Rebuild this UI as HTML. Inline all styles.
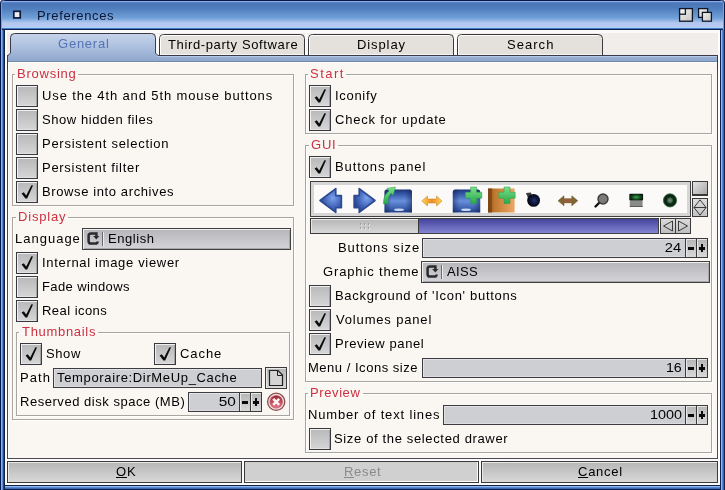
<!DOCTYPE html>
<html><head><meta charset="utf-8"><style>
*{margin:0;padding:0;box-sizing:border-box}
html,body{width:725px;height:490px;overflow:hidden}
body{position:relative;background:#f0edea;font-family:"Liberation Sans",sans-serif;font-size:13px;line-height:15px;color:#000}
.a{position:absolute}
.t{position:absolute;white-space:nowrap;will-change:transform}
#title{left:0;top:0;width:725px;height:30px;border-radius:4px 4px 0 0;box-shadow:inset 1px 0 0 #0a1a48, inset 2px 0 0 #7c9ee0, inset -1px 0 0 #0a1a48, inset -2px 0 0 #7c9ee0;background:linear-gradient(#0a1a48 0,#0a1a48 1px,#88a8e8 1px,#88a8e8 2px,#6890d0 2px,#4a76b8 3px,#4e7cbc 8px,#70a0d8 18px,#b4c8f0 23px,#b8ccf2 27px,#a8d4ff 27px,#a8d4ff 28px,#4878c0 28px,#4878c0 29px,#102050 29px,#102050 30px)}
#bl{left:0;top:30px;width:5px;height:460px;background:linear-gradient(90deg,#001850 0,#001850 1px,#8ab0f0 1px,#8ab0f0 2px,#5a88d0 2px,#5a88d0 3px,#2a4a90 3px,#2a4a90 4px,#102040 4px,#102040 5px)}
#br{left:720px;top:30px;width:5px;height:460px;background:linear-gradient(90deg,#102050 0,#102050 1px,#90b8f8 1px,#90b8f8 2px,#5a88d0 2px,#5a88d0 3px,#3a68b0 3px,#3a68b0 4px,#102050 4px,#102050 5px)}
#bb{left:0;top:485px;width:725px;height:5px;background:linear-gradient(#102040 0,#102040 1px,#90b8f8 1px,#90b8f8 2px,#5a88d0 2px,#5a88d0 3px,#3a68b0 3px,#3a68b0 4px,#102050 4px,#102050 5px)}
#inner{left:5px;top:30px;width:715px;height:455px;background:#f0edea;border-left:2px solid #fff;border-top:3px solid #fbfaf8;border-bottom:2px solid #fff;border-right:2px solid #fff}
#page{left:7px;top:55px;width:711px;height:404px;border:1px solid #4a4a54;background:#faf7f3;box-shadow:inset 1px 0 0 #fff}
.g{position:absolute;border:1px solid #a8a4a0;box-shadow:1px 1px 0 #fff, inset 1px 1px 0 #fff}
.gl{position:absolute;background:#faf7f3}
.cb{position:absolute;width:22px;height:22px;border:1px solid #383840;background:linear-gradient(#b8b8b8,#d6d6d6);box-shadow:inset 1px 1px 0 #f0f0f0, inset -1px 0 0 #a4a4a4, inset 0 -1px 0 #e2e2e2}
.cb svg{position:absolute;left:0;top:0}
.pop{position:absolute;border:1px solid #404040;background:linear-gradient(#b6b6ba,#d4d4d8);box-shadow:inset 1px 1px 0 #f0f0f0, inset -1px -1px 0 #a8a8ac}
.str{position:absolute;border:1px solid #3c3c42;background:#cecfd2;box-shadow:inset 1px 1px 0 #e2e2e6, inset 0 -1px 0 #dcdce0}
.btn{position:absolute;border:1px solid #3a3a3a;background:linear-gradient(#b6b6b6,#d8d8d8);box-shadow:inset 1px 1px 0 #e8e8e8}
</style></head><body>
<div id="title" class="a"></div><div id="bb" class="a"></div><div id="bl" class="a"></div><div id="br" class="a"></div><div id="inner" class="a"></div>
<svg class="a" style="left:10px;top:7px" width="15" height="15" viewBox="10 7 15 15"><rect x="13.8" y="11.3" width="6.4" height="6.6" fill="#f0eeea" stroke="#101a40" stroke-width="1.7"/></svg>
<div class="t" style="left:36.6px;top:8px;letter-spacing:0.650px;color:#0e1634;">Preferences</div>
<svg class="a" style="left:676px;top:5px" width="40" height="20" viewBox="676 5 40 20"><defs><linearGradient id="tg" x1="0" y1="0" x2="1" y2="1"><stop offset="0" stop-color="#f4f2ee"/><stop offset="1" stop-color="#c8c6c4"/></linearGradient></defs><rect x="679.6" y="8.6" width="12.8" height="12.6" fill="url(#tg)" stroke="#101828" stroke-width="1.3"/><rect x="679.6" y="8.6" width="5.8" height="5.6" fill="#f2f0ec" stroke="#101828" stroke-width="1.3"/><rect x="698.6" y="8.6" width="9" height="8.8" fill="url(#tg)" stroke="#101828" stroke-width="1.3"/><rect x="702.4" y="12.4" width="9" height="8.8" fill="url(#tg)" stroke="#101828" stroke-width="1.3"/></svg>
<div id="page" class="a"></div>
<svg class="a" style="left:0;top:0" width="725" height="70" viewBox="0 0 725 70">
<defs><linearGradient id="gact" x1="0" y1="0" x2="0" y2="1"><stop offset="0" stop-color="#c6d4ea"/><stop offset="0.55" stop-color="#a8bcdc"/><stop offset="1" stop-color="#8ea6cc"/></linearGradient></defs>
<rect x="156" y="34" width="3" height="21" fill="#fbfaf8"/><rect x="305" y="34" width="3" height="21" fill="#fbfaf8"/><rect x="454" y="34" width="3" height="21" fill="#fbfaf8"/>
<g fill="#e4e1dc" stroke="#3a3a3e" stroke-width="1">
<path d="M159.5,55.5 V38.5 Q159.5,34.5 163.5,34.5 H300.5 Q304.5,34.5 304.5,38.5 V55.5"/>
<path d="M308.5,55.5 V38.5 Q308.5,34.5 312.5,34.5 H449.5 Q453.5,34.5 453.5,38.5 V55.5"/>
<path d="M457.5,55.5 V38.5 Q457.5,34.5 461.5,34.5 H598.5 Q602.5,34.5 602.5,38.5 V55.5"/>
</g>
<g stroke="#ffffff" stroke-width="1" fill="none">
<path d="M160.5,54.5 V38.5 Q160.5,35.5 163.5,35.5 H300"/><path d="M309.5,54.5 V38.5 Q309.5,35.5 312.5,35.5 H449"/><path d="M458.5,54.5 V38.5 Q458.5,35.5 461.5,35.5 H598"/><path d="M160,54.5 H304 M309,54.5 H453 M458,54.5 H602" stroke="#f6f4f2"/>
</g>
<path d="M7.5,62 V56 L10.5,53 V37.5 Q10.5,33.5 14.5,33.5 H151.5 Q155.5,33.5 155.5,37.5 V53 L158,55.5 H717.5 V62 Z" fill="url(#gact)"/>
<path d="M7.5,70 V56 L10.5,53 V37.5 Q10.5,33.5 14.5,33.5 H151.5 Q155.5,33.5 155.5,37.5 V53 L158,55.5 H717.5 V70" fill="none" stroke="#3a3a48" stroke-width="1"/>
<rect x="157" y="56" width="560" height="1" fill="#b4c8e8"/><rect x="8" y="61" width="709" height="1" fill="#7088aa"/><rect x="8" y="62" width="709" height="1" fill="#ffffff"/>
</svg>
<div class="t" style="left:57.8px;top:36px;letter-spacing:0.767px;color:#5674b4;">General</div>
<div class="t" style="left:168.3px;top:37px;letter-spacing:0.626px;">Third-party Software</div>
<div class="t" style="left:357.2px;top:37px;letter-spacing:0.900px;">Display</div>
<div class="t" style="left:507.4px;top:37px;letter-spacing:1.040px;">Search</div>
<div class="g" style="left:12px;top:74px;width:282px;height:132px"></div>
<div class="gl" style="left:15px;top:71px;width:63px;height:4px"></div>
<div class="t" style="left:17.2px;top:66px;letter-spacing:0.757px;color:#cc3040;">Browsing</div>
<div class="cb" style="left:16px;top:85px"></div>
<div class="t" style="left:41.5px;top:88px;letter-spacing:0.869px;">Use the 4th and 5th mouse buttons</div>
<div class="cb" style="left:16px;top:109px"></div>
<div class="t" style="left:41.5px;top:112px;letter-spacing:0.556px;">Show hidden files</div>
<div class="cb" style="left:16px;top:133px"></div>
<div class="t" style="left:41.5px;top:136px;letter-spacing:0.726px;">Persistent selection</div>
<div class="cb" style="left:16px;top:157px"></div>
<div class="t" style="left:41.5px;top:160px;letter-spacing:0.706px;">Persistent filter</div>
<div class="cb" style="left:16px;top:181px"><svg width="22" height="22" viewBox="0 0 22 22"><path d="M4.6,11.6 L6.8,10.2 L9.2,13.4 L14.4,3.2 L16,3.6 L10.2,16.4 L8.4,16.6 Z" fill="#0a0a0a"/></svg></div>
<div class="t" style="left:41.5px;top:184px;letter-spacing:0.611px;">Browse into archives</div>
<div class="g" style="left:12px;top:217px;width:282px;height:203px"></div>
<div class="gl" style="left:16px;top:214px;width:52px;height:4px"></div>
<div class="t" style="left:17.8px;top:209px;letter-spacing:0.833px;color:#cc3040;">Display</div>
<div class="t" style="left:15.1px;top:231px;letter-spacing:1.000px;">Language</div>
<div class="pop" style="left:82px;top:228px;width:209px;height:22px"></div>
<div class="a" style="left:82px;top:228px"><svg width="22" height="22" viewBox="0 0 22 22"><path d="M14.4,8.5 V5.4 H9 Q6.6,5.4 6.6,7.8 V13.2 Q6.6,15.6 9,15.6 H13.2 Q15.6,15.6 15.6,13.4" fill="none" stroke="#2c2c2c" stroke-width="2.5"/><path d="M11.2,8 H17.4 L14.3,11.4 Z" fill="#2c2c2c"/></svg></div>
<div class="a" style="left:102px;top:232px;width:1px;height:14px;background:#6a6a6a;box-shadow:1px 0 0 #ececec"></div>
<div class="t" style="left:107.5px;top:231px;letter-spacing:0.550px;">English</div>
<div class="cb" style="left:16px;top:252px"><svg width="22" height="22" viewBox="0 0 22 22"><path d="M4.6,11.6 L6.8,10.2 L9.2,13.4 L14.4,3.2 L16,3.6 L10.2,16.4 L8.4,16.6 Z" fill="#0a0a0a"/></svg></div>
<div class="t" style="left:41.5px;top:255px;letter-spacing:0.680px;">Internal image viewer</div>
<div class="cb" style="left:16px;top:276px"></div>
<div class="t" style="left:41.5px;top:279px;letter-spacing:0.400px;">Fade windows</div>
<div class="cb" style="left:16px;top:300px"><svg width="22" height="22" viewBox="0 0 22 22"><path d="M4.6,11.6 L6.8,10.2 L9.2,13.4 L14.4,3.2 L16,3.6 L10.2,16.4 L8.4,16.6 Z" fill="#0a0a0a"/></svg></div>
<div class="t" style="left:41.5px;top:303px;letter-spacing:0.456px;">Real icons</div>
<div class="g" style="left:16px;top:332px;width:274px;height:84px"></div>
<div class="gl" style="left:19px;top:329px;width:79px;height:4px"></div>
<div class="t" style="left:21.8px;top:324px;letter-spacing:0.689px;color:#cc3040;">Thumbnails</div>
<div class="cb" style="left:20px;top:343px"><svg width="22" height="22" viewBox="0 0 22 22"><path d="M4.6,11.6 L6.8,10.2 L9.2,13.4 L14.4,3.2 L16,3.6 L10.2,16.4 L8.4,16.6 Z" fill="#0a0a0a"/></svg></div>
<div class="t" style="left:45.9px;top:346px;letter-spacing:0.600px;">Show</div>
<div class="cb" style="left:154px;top:343px"><svg width="22" height="22" viewBox="0 0 22 22"><path d="M4.6,11.6 L6.8,10.2 L9.2,13.4 L14.4,3.2 L16,3.6 L10.2,16.4 L8.4,16.6 Z" fill="#0a0a0a"/></svg></div>
<div class="t" style="left:179.5px;top:346px;letter-spacing:0.925px;">Cache</div>
<div class="t" style="left:19.8px;top:370px;letter-spacing:1.100px;">Path</div>
<div class="str" style="left:53px;top:368px;width:209px;height:20px"></div>
<div class="t" style="left:57.2px;top:370px;letter-spacing:0.652px;">Temporaire:DirMeUp_Cache</div>
<div class="btn" style="left:265px;top:367px;width:22px;height:22px"></div>
<svg class="a" style="left:265px;top:367px" width="22" height="22" viewBox="0 0 22 22"><path d="M4.5,3.5 H13 L17.5,8 V18.5 H4.5 Z" fill="#d4d4d4" stroke="#202020" stroke-width="1.2"/><path d="M12.5,3.5 V8.5 H17.5" fill="none" stroke="#202020" stroke-width="1"/></svg>
<div class="t" style="left:19.7px;top:394px;letter-spacing:0.535px;">Reserved disk space (MB)</div>
<div class="str" style="left:188px;top:392px;width:52px;height:20px"></div>
<div class="btn ib" style="left:239px;top:392px;width:12px;height:20px"></div>
<div class="btn ib" style="left:250px;top:392px;width:12px;height:20px"></div>
<div class="a" style="left:242px;top:401px;width:6px;height:2.5px;background:#0a0a0a"></div>
<div class="a" style="left:253px;top:401px;width:6px;height:2.5px;background:#0a0a0a"></div>
<div class="a" style="left:254.8px;top:398px;width:2.5px;height:8px;background:#0a0a0a"></div>
<div class="t" style="left:219.2px;top:394px;transform:scaleX(1.183);transform-origin:1px 0;">50</div>
<svg class="a" style="left:264px;top:390px" width="26" height="24" viewBox="264 390 26 24"><defs><linearGradient id="rx" x1="0" y1="0" x2="0" y2="1"><stop offset="0" stop-color="#9a2434"/><stop offset="1" stop-color="#ea7a8a"/></linearGradient></defs><circle cx="276.2" cy="401.8" r="8.6" fill="#f0dcdc" stroke="#8a4a4a" stroke-width="1.3"/><circle cx="276.2" cy="401.8" r="6.3" fill="url(#rx)" stroke="#b05060" stroke-width="0.6"/><path d="M273.2,398.8 L279.2,404.8 M279.2,398.8 L273.2,404.8" stroke="#fbf4f0" stroke-width="2.6"/></svg>
<div class="g" style="left:305px;top:74px;width:407px;height:60px"></div>
<div class="gl" style="left:308px;top:71px;width:38px;height:4px"></div>
<div class="t" style="left:310.3px;top:66px;letter-spacing:1.500px;color:#cc3040;">Start</div>
<div class="cb" style="left:309px;top:85px"><svg width="22" height="22" viewBox="0 0 22 22"><path d="M4.6,11.6 L6.8,10.2 L9.2,13.4 L14.4,3.2 L16,3.6 L10.2,16.4 L8.4,16.6 Z" fill="#0a0a0a"/></svg></div>
<div class="t" style="left:334.5px;top:88px;letter-spacing:0.700px;">Iconify</div>
<div class="cb" style="left:309px;top:109px"><svg width="22" height="22" viewBox="0 0 22 22"><path d="M4.6,11.6 L6.8,10.2 L9.2,13.4 L14.4,3.2 L16,3.6 L10.2,16.4 L8.4,16.6 Z" fill="#0a0a0a"/></svg></div>
<div class="t" style="left:334.5px;top:112px;letter-spacing:0.787px;">Check for update</div>
<div class="g" style="left:305px;top:145px;width:407px;height:237px"></div>
<div class="gl" style="left:309px;top:142px;width:29px;height:4px"></div>
<div class="t" style="left:310.8px;top:137px;letter-spacing:0.800px;color:#cc3040;">GUI</div>
<div class="cb" style="left:309px;top:156px"><svg width="22" height="22" viewBox="0 0 22 22"><path d="M4.6,11.6 L6.8,10.2 L9.2,13.4 L14.4,3.2 L16,3.6 L10.2,16.4 L8.4,16.6 Z" fill="#0a0a0a"/></svg></div>
<div class="t" style="left:334.5px;top:159px;letter-spacing:0.900px;">Buttons panel</div>
<div class="a" style="left:310px;top:181px;width:381px;height:36px;border:1px solid #404040;background:#fbfaf8;box-shadow:inset 0 0 0 3px #d6d6d6"></div>
<svg class="a" style="left:300px;top:180px" width="390" height="40" viewBox="300 180 390 40">
<defs>
<linearGradient id="ib" x1="0" y1="0" x2="1" y2="1"><stop offset="0" stop-color="#6a96e0"/><stop offset="0.5" stop-color="#4a72c4"/><stop offset="1" stop-color="#284a98"/></linearGradient>
<radialGradient id="ib2" cx="0.6" cy="0.4" r="0.65"><stop offset="0" stop-color="#7aa2ec"/><stop offset="0.55" stop-color="#4668bc"/><stop offset="1" stop-color="#243e88"/></radialGradient>
<linearGradient id="dr" x1="0" y1="0" x2="0" y2="1"><stop offset="0" stop-color="#1c3474"/><stop offset="0.15" stop-color="#3050a0"/><stop offset="0.5" stop-color="#6890dc"/><stop offset="0.85" stop-color="#3a5cac"/><stop offset="1" stop-color="#1e3a80"/></linearGradient><linearGradient id="drx" x1="0" y1="0" x2="1" y2="0"><stop offset="0" stop-color="#102050" stop-opacity="0.5"/><stop offset="0.25" stop-color="#102050" stop-opacity="0"/><stop offset="0.75" stop-color="#102050" stop-opacity="0"/><stop offset="1" stop-color="#102050" stop-opacity="0.5"/></linearGradient>
<linearGradient id="gr" x1="0" y1="0" x2="0" y2="1"><stop offset="0" stop-color="#7ae08a"/><stop offset="1" stop-color="#2aa84a"/></linearGradient>
<linearGradient id="icbr" x1="0" y1="0" x2="1" y2="0"><stop offset="0" stop-color="#8a5018"/><stop offset="0.25" stop-color="#c07830"/><stop offset="1" stop-color="#eaa868"/></linearGradient>
<linearGradient id="or" x1="0" y1="0" x2="1" y2="0"><stop offset="0" stop-color="#ffd850"/><stop offset="0.5" stop-color="#f08828"/><stop offset="1" stop-color="#ffd850"/></linearGradient>
<radialGradient id="bomb" cx="0.55" cy="0.5" r="0.55"><stop offset="0" stop-color="#24346c"/><stop offset="0.6" stop-color="#0a1230"/><stop offset="1" stop-color="#02040e"/></radialGradient>
<radialGradient id="gc" cx="0.5" cy="0.5" r="0.5"><stop offset="0" stop-color="#7a9a80"/><stop offset="0.6" stop-color="#4a6a52"/><stop offset="1" stop-color="#1a3a22"/></radialGradient>
<radialGradient id="gband" cx="0.5" cy="0.5" r="0.5" gradientTransform="translate(0 0) scale(1 1)"><stop offset="0" stop-color="#3aa84a"/><stop offset="0.5" stop-color="#1a5a26"/><stop offset="1" stop-color="#081a0c"/></radialGradient></defs>
<!-- left arrow -->
<path d="M320,200.5 L335.8,188.6 V195.6 H341.4 V207.8 H335.8 V212.4 Z" fill="url(#ib2)" stroke="#2c4a94" stroke-width="1.6" stroke-linejoin="round"/>
<!-- right arrow -->
<path d="M375,200.5 L359.2,188.6 V195.6 H354.1 V207.8 H359.2 V212.4 Z" fill="url(#ib2)" stroke="#2c4a94" stroke-width="1.6" stroke-linejoin="round"/>
<!-- drawer with green arrow -->
<path d="M384.5,192 Q384.5,189.5 387,189.5 H409.5 Q412,189.5 412,192 V212.5 H384.5 Z" fill="url(#dr)"/>
<path d="M384.5,192 Q384.5,189.5 387,189.5 H409.5 Q412,189.5 412,192 V212.5 H384.5 Z" fill="url(#drx)"/><ellipse cx="399" cy="209.8" rx="5" ry="1.3" fill="#e0ecff" opacity="0.85"/>
<path d="M383.5,204 Q383,195 389,191 L387,188.2 L395.5,187 L393.2,195.4 L391.2,193.2 Q387.5,196.5 388,204 Z" fill="url(#gr)" stroke="#1e8a3a" stroke-width="0.4"/>
<!-- orange double arrow -->
<path d="M421.8,201 L427.5,196 V199 H436.5 V196 L442,201 L436.5,206 V203 H427.5 V206 Z" fill="url(#or)" stroke="#b88020" stroke-width="0.5"/>
<!-- blue drawer + green plus -->
<path d="M452.8,192 Q452.8,189.5 455.5,189.5 H477.5 Q480.2,189.5 480.2,192 V212.5 H452.8 Z" fill="url(#dr)"/>
<path d="M452.8,192 Q452.8,189.5 455.5,189.5 H477.5 Q480.2,189.5 480.2,192 V212.5 H452.8 Z" fill="url(#drx)"/><ellipse cx="466" cy="209.8" rx="5" ry="1.3" fill="#e0ecff" opacity="0.85"/>
<path d="M470.6,187 H476.6 V192.2 H481.8 V198.2 H476.6 V203.4 H470.6 V198.2 H465.4 V192.2 H470.6 Z" fill="url(#gr)" stroke="#2a9a48" stroke-width="0.5"/>
<!-- brown box + green plus -->
<rect x="488" y="188.5" width="26.6" height="24" fill="url(#icbr)"/>
<rect x="488" y="188.5" width="4" height="24" fill="#7a4414" opacity="0.8"/>
<path d="M504,187 H510 V192.2 H515.2 V198.2 H510 V203.4 H504 V198.2 H498.8 V192.2 H504 Z" fill="url(#gr)" stroke="#2a9a48" stroke-width="0.5"/>
<!-- bomb -->
<path d="M526,193 L531,192.5 L532,196 L528,198 Z" fill="#3a3a40"/>
<circle cx="533.6" cy="200.4" r="6.4" fill="url(#bomb)"/>
<!-- brown double arrow -->
<path d="M558,200.8 L564,195.8 V198.8 H571.8 V195.8 L577.8,200.8 L571.8,205.8 V202.8 H564 V205.8 Z" fill="#7e6634" stroke="#6a5428" stroke-width="0.5"/>
<rect x="564" y="198.8" width="7.8" height="4" fill="#94603c"/>
<!-- magnifier -->
<path d="M599.5,202.5 L595.5,206.5" stroke="#101010" stroke-width="2.4" stroke-linecap="round"/>
<circle cx="603" cy="199" r="5" fill="#7a7a7a" stroke="#3a3a3a" stroke-width="1.4"/>
<!-- green band box -->
<rect x="629.8" y="200.4" width="12.8" height="6.6" fill="#8a8a8a"/>
<rect x="629.8" y="206" width="12.8" height="1" fill="#5a5a5a"/>
<rect x="629.3" y="193.8" width="13.8" height="6.8" rx="1" fill="url(#gband)"/>
<!-- green circle -->
<circle cx="670" cy="200.4" r="6.6" fill="#0c2614" stroke="#2a6a3a" stroke-width="0.8"/>
<circle cx="670" cy="200.4" r="3.4" fill="url(#gc)"/>
</svg>

<div class="a" style="left:692px;top:181px;width:16px;height:15px;border:1px solid #3a3a3a;border-bottom-width:2px;background:linear-gradient(135deg,#e4e4e4,#a8a8a8)"></div>
<div class="a" style="left:692px;top:198px;width:16px;height:19px;border:1px solid #3a3a3a;background:linear-gradient(#dcdcdc,#c4c4c4)"></div>
<svg class="a" style="left:692px;top:198px" width="16" height="19"><path d="M2,9.5 L8,1.8 L14,9.5 Z M2,9.5 L8,17.2 L14,9.5" fill="none" stroke="#3a3a3a" stroke-width="1"/></svg>
<div class="a" style="left:310px;top:218px;width:349px;height:16px;border:1px solid #404040;background:linear-gradient(#44449c,#8484d4)"></div>
<div class="btn" style="left:310px;top:218px;width:109px;height:16px"></div>
<svg class="a" style="left:358px;top:222px" width="14" height="9"><g fill="#7a7a7a"><rect x="2" y="1.5" width="1" height="1"/><rect x="6" y="1.5" width="1" height="1"/><rect x="10" y="1.5" width="1" height="1"/><rect x="2" y="5.5" width="1" height="1"/><rect x="6" y="5.5" width="1" height="1"/><rect x="10" y="5.5" width="1" height="1"/></g><g fill="#ffffff"><rect x="3" y="2.5" width="1" height="1"/><rect x="7" y="2.5" width="1" height="1"/><rect x="11" y="2.5" width="1" height="1"/><rect x="3" y="6.5" width="1" height="1"/><rect x="7" y="6.5" width="1" height="1"/><rect x="11" y="6.5" width="1" height="1"/></g></svg>
<div class="a" style="left:660px;top:218px;width:16px;height:16px;border:1px solid #3a3a3a;background:linear-gradient(#dadada,#c0c0c0)"></div>
<div class="a" style="left:675px;top:218px;width:16px;height:16px;border:1px solid #3a3a3a;background:linear-gradient(#dadada,#c0c0c0)"></div>
<svg class="a" style="left:660px;top:218px" width="31" height="16"><path d="M12.5,3 L3.5,8 L12.5,13 Z M18.5,3 L27.5,8 L18.5,13 Z" fill="none" stroke="#3a3a3a" stroke-width="1"/></svg>
<div class="t" style="left:338.2px;top:240px;letter-spacing:0.945px;">Buttons size</div>
<div class="str" style="left:422px;top:238px;width:264px;height:20px"></div>
<div class="btn ib" style="left:685px;top:238px;width:12px;height:20px"></div>
<div class="btn ib" style="left:696px;top:238px;width:12px;height:20px"></div>
<div class="a" style="left:688px;top:247px;width:6px;height:2.5px;background:#0a0a0a"></div>
<div class="a" style="left:699px;top:247px;width:6px;height:2.5px;background:#0a0a0a"></div>
<div class="a" style="left:700.8px;top:244px;width:2.5px;height:8px;background:#0a0a0a"></div>
<div class="t" style="left:665.4px;top:240px;transform:scaleX(1.133);transform-origin:1px 0;">24</div>
<div class="t" style="left:322.8px;top:264px;letter-spacing:0.858px;">Graphic theme</div>
<div class="pop" style="left:421px;top:261px;width:289px;height:22px"></div>
<div class="a" style="left:421px;top:261px"><svg width="22" height="22" viewBox="0 0 22 22"><path d="M14.4,8.5 V5.4 H9 Q6.6,5.4 6.6,7.8 V13.2 Q6.6,15.6 9,15.6 H13.2 Q15.6,15.6 15.6,13.4" fill="none" stroke="#2c2c2c" stroke-width="2.5"/><path d="M11.2,8 H17.4 L14.3,11.4 Z" fill="#2c2c2c"/></svg></div>
<div class="a" style="left:441px;top:265px;width:1px;height:14px;background:#6a6a6a;box-shadow:1px 0 0 #ececec"></div>
<div class="t" style="left:447.3px;top:264px;letter-spacing:0.333px;">AISS</div>
<div class="cb" style="left:309px;top:285px"></div>
<div class="t" style="left:334.5px;top:288px;letter-spacing:0.689px;">Background of 'Icon' buttons</div>
<div class="cb" style="left:309px;top:309px"><svg width="22" height="22" viewBox="0 0 22 22"><path d="M4.6,11.6 L6.8,10.2 L9.2,13.4 L14.4,3.2 L16,3.6 L10.2,16.4 L8.4,16.6 Z" fill="#0a0a0a"/></svg></div>
<div class="t" style="left:335.5px;top:312px;letter-spacing:0.833px;">Volumes panel</div>
<div class="cb" style="left:309px;top:333px"><svg width="22" height="22" viewBox="0 0 22 22"><path d="M4.6,11.6 L6.8,10.2 L9.2,13.4 L14.4,3.2 L16,3.6 L10.2,16.4 L8.4,16.6 Z" fill="#0a0a0a"/></svg></div>
<div class="t" style="left:334.5px;top:336px;letter-spacing:0.583px;">Preview panel</div>
<div class="t" style="left:308.4px;top:360px;letter-spacing:0.519px;">Menu / Icons size</div>
<div class="str" style="left:422px;top:358px;width:264px;height:20px"></div>
<div class="btn ib" style="left:685px;top:358px;width:12px;height:20px"></div>
<div class="btn ib" style="left:696px;top:358px;width:12px;height:20px"></div>
<div class="a" style="left:688px;top:367px;width:6px;height:2.5px;background:#0a0a0a"></div>
<div class="a" style="left:699px;top:367px;width:6px;height:2.5px;background:#0a0a0a"></div>
<div class="a" style="left:700.8px;top:364px;width:2.5px;height:8px;background:#0a0a0a"></div>
<div class="t" style="left:666.0px;top:360px;transform:scaleX(1.100);transform-origin:1px 0;">16</div>
<div class="g" style="left:305px;top:393px;width:407px;height:60px"></div>
<div class="gl" style="left:308px;top:390px;width:55px;height:4px"></div>
<div class="t" style="left:310.2px;top:385px;letter-spacing:0.600px;color:#cc3040;">Preview</div>
<div class="t" style="left:308.4px;top:407px;letter-spacing:0.837px;">Number of text lines</div>
<div class="str" style="left:443px;top:405px;width:243px;height:20px"></div>
<div class="btn ib" style="left:685px;top:405px;width:12px;height:20px"></div>
<div class="btn ib" style="left:696px;top:405px;width:12px;height:20px"></div>
<div class="a" style="left:688px;top:414px;width:6px;height:2.5px;background:#0a0a0a"></div>
<div class="a" style="left:699px;top:414px;width:6px;height:2.5px;background:#0a0a0a"></div>
<div class="a" style="left:700.8px;top:411px;width:2.5px;height:8px;background:#0a0a0a"></div>
<div class="t" style="left:650.4px;top:407px;transform:scaleX(1.107);transform-origin:1px 0;">1000</div>
<div class="cb" style="left:309px;top:428px"></div>
<div class="t" style="left:334.4px;top:431px;letter-spacing:0.646px;">Size of the selected drawer</div>
<div class="a" style="left:5px;top:459px;width:715px;height:26px;background:#fcfbfa"></div>
<div class="btn" style="left:7px;top:461px;width:235px;height:22px"></div>
<div class="a" style="left:244px;top:461px;width:235px;height:22px;border:1px solid #3a3a3a;background:#d0d0d0;box-shadow:inset -1px -1px 0 #fafafa"></div>
<div class="btn" style="left:481px;top:461px;width:237px;height:22px"></div>
<div class="t" style="left:115.8px;top:464px;letter-spacing:0.800px;"><u>O</u>K</div>
<div class="t" style="left:343.5px;top:464px;letter-spacing:0.675px;color:#8a8a8a;"><u>R</u>eset</div>
<div class="t" style="left:577.8px;top:464px;letter-spacing:0.740px;"><u>C</u>ancel</div>
</body></html>
